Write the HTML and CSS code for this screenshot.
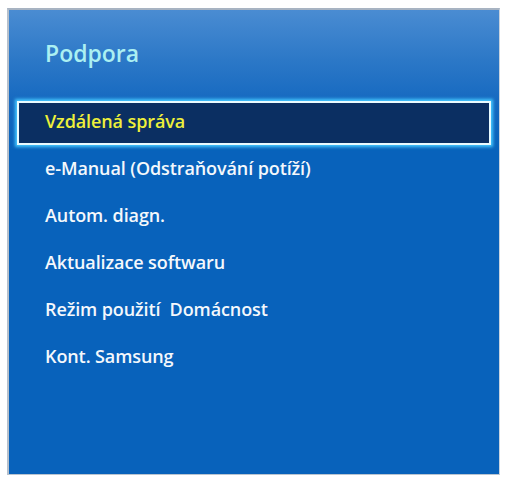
FILE: index.html
```html
<!DOCTYPE html>
<html lang="cs">
<head>
<meta charset="utf-8">
<title>Podpora</title>
<link rel="stylesheet" href="styles.css">
</head>
<body>
<div class="panel">
  <h1 class="title">Podpora</h1>
  <ul class="menu">
    <li class="item selected">Vzdálená správa</li>
    <li class="item">e-Manual (Odstraňování potíží)</li>
    <li class="item">Autom. diagn.</li>
    <li class="item">Aktualizace softwaru</li>
    <li class="item">Režim použití&nbsp; Domácnost</li>
    <li class="item">Kont. Samsung</li>
  </ul>
</div>
</body>
</html>
```
FILE: styles.css
```css
html, body {
  margin: 0;
  padding: 0;
  background: #ffffff;
}
body {
  padding: 8px 7px 4px 7px;
}
.panel {
  box-sizing: border-box;
  width: 493px;
  height: 467px;
  border-top: 2px solid #a7b3c2;
  border-left: 2px solid #b6c0cc;
  border-right: 1px solid #c9d3de;
  border-bottom: 1px solid #b9c4d0;
  background: linear-gradient(to bottom, #4a8cd2 0px, #2c78c7 50px, #1468c0 95px, #0862bb 140px, #0862bb 100%);
  font-family: "Open Sans", "DejaVu Sans", sans-serif;
  font-weight: 600;
  color: #f4f8fc;
}
.title {
  margin: 0;
  padding: 28px 0 0 36px;
  height: 62px;
  box-sizing: border-box;
  font-size: 23px;
  line-height: 30px;
  font-weight: 600;
  color: #abf0f2;
}
.menu {
  list-style: none;
  margin: 0;
  padding: 29px 0 0 8px;
}
.item {
  width: 474px;
  box-sizing: border-box;
  height: 47px;
  padding-left: 28px;
  font-size: 18px;
  line-height: 41px;
  letter-spacing: -0.1px;
}
.selected {
  height: 44px;
  margin-bottom: 3px;
  border: 2px solid #e9fbff;
  background: #0b2f62;
  color: #eef03a;
  padding-left: 26px;
  line-height: 37px;
  box-shadow: 0 0 3px 2px #46c8ff;
}
```
